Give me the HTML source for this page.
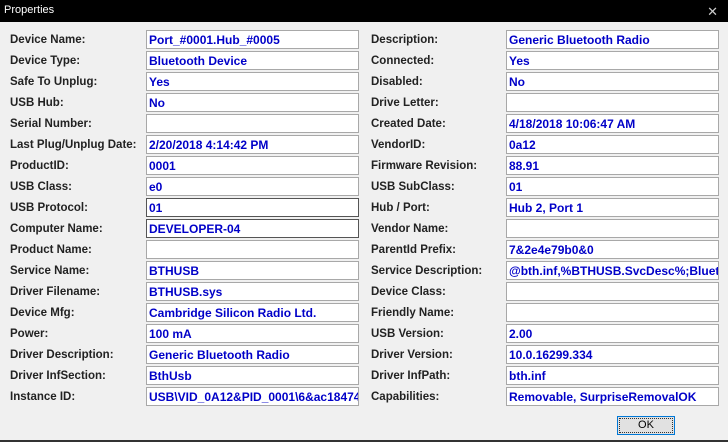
<!DOCTYPE html><html><head><style>
body{margin:0;width:728px;height:442px;background:#f0f0f0;position:relative;overflow:hidden;font-family:"Liberation Sans",sans-serif;}
.t{position:absolute;left:0;top:0;width:728px;height:22px;background:#000;color:#fff;font-size:11px;line-height:22px;}
.t span{position:absolute;left:4px;top:-1px}
.x{position:absolute;right:10px;top:1px;font-size:13px;color:#ccc}
.l{position:absolute;font-size:11.5px;font-weight:bold;color:#222;white-space:nowrap;margin-top:1px}
.f{position:absolute;height:17px;background:#fff;border:1px solid #a8a8a8;font-size:12px;font-weight:bold;color:#0000c8;line-height:18px;padding-left:2px;overflow:hidden;white-space:nowrap;box-sizing:content-box}
.d{border-color:#555}
.ok{position:absolute;left:617px;top:416px;width:56px;height:17px;border:1px solid #0078d7;background:#e1e1e1;font-size:11px;text-align:center;line-height:17px;outline:1px dotted #333;outline-offset:-3px}
.bt{position:absolute;left:0;top:440px;width:728px;height:2px;background:#333}
</style></head><body>
<div class="t"><span>Properties</span><div class="x">✕</div></div>
<div class="ok">OK</div>
<div class="bt"></div>
<div class="l" style="left:10px;top:33px">Device Name:</div><div class="f" style="left:146px;top:30px;width:209px">Port_#0001.Hub_#0005</div>
<div class="l" style="left:10px;top:54px">Device Type:</div><div class="f" style="left:146px;top:51px;width:209px">Bluetooth Device</div>
<div class="l" style="left:10px;top:75px">Safe To Unplug:</div><div class="f" style="left:146px;top:72px;width:209px">Yes</div>
<div class="l" style="left:10px;top:96px">USB Hub:</div><div class="f" style="left:146px;top:93px;width:209px">No</div>
<div class="l" style="left:10px;top:117px">Serial Number:</div><div class="f" style="left:146px;top:114px;width:209px"></div>
<div class="l" style="left:10px;top:138px">Last Plug/Unplug Date:</div><div class="f" style="left:146px;top:135px;width:209px">2/20/2018 4:14:42 PM</div>
<div class="l" style="left:10px;top:159px">ProductID:</div><div class="f" style="left:146px;top:156px;width:209px">0001</div>
<div class="l" style="left:10px;top:180px">USB Class:</div><div class="f" style="left:146px;top:177px;width:209px">e0</div>
<div class="l" style="left:10px;top:201px">USB Protocol:</div><div class="f d" style="left:146px;top:198px;width:209px">01</div>
<div class="l" style="left:10px;top:222px">Computer Name:</div><div class="f d" style="left:146px;top:219px;width:209px">DEVELOPER-04</div>
<div class="l" style="left:10px;top:243px">Product Name:</div><div class="f" style="left:146px;top:240px;width:209px"></div>
<div class="l" style="left:10px;top:264px">Service Name:</div><div class="f" style="left:146px;top:261px;width:209px">BTHUSB</div>
<div class="l" style="left:10px;top:285px">Driver Filename:</div><div class="f" style="left:146px;top:282px;width:209px">BTHUSB.sys</div>
<div class="l" style="left:10px;top:306px">Device Mfg:</div><div class="f" style="left:146px;top:303px;width:209px">Cambridge Silicon Radio Ltd.</div>
<div class="l" style="left:10px;top:327px">Power:</div><div class="f" style="left:146px;top:324px;width:209px">100 mA</div>
<div class="l" style="left:10px;top:348px">Driver Description:</div><div class="f" style="left:146px;top:345px;width:209px">Generic Bluetooth Radio</div>
<div class="l" style="left:10px;top:369px">Driver InfSection:</div><div class="f" style="left:146px;top:366px;width:209px">BthUsb</div>
<div class="l" style="left:10px;top:390px">Instance ID:</div><div class="f" style="left:146px;top:387px;width:209px">USB\VID_0A12&amp;PID_0001\6&amp;ac18474a</div>
<div class="l" style="left:371px;top:33px">Description:</div><div class="f" style="left:506px;top:30px;width:209px">Generic Bluetooth Radio</div>
<div class="l" style="left:371px;top:54px">Connected:</div><div class="f" style="left:506px;top:51px;width:209px">Yes</div>
<div class="l" style="left:371px;top:75px">Disabled:</div><div class="f" style="left:506px;top:72px;width:209px">No</div>
<div class="l" style="left:371px;top:96px">Drive Letter:</div><div class="f" style="left:506px;top:93px;width:209px"></div>
<div class="l" style="left:371px;top:117px">Created Date:</div><div class="f" style="left:506px;top:114px;width:209px">4/18/2018 10:06:47 AM</div>
<div class="l" style="left:371px;top:138px">VendorID:</div><div class="f" style="left:506px;top:135px;width:209px">0a12</div>
<div class="l" style="left:371px;top:159px">Firmware Revision:</div><div class="f" style="left:506px;top:156px;width:209px">88.91</div>
<div class="l" style="left:371px;top:180px">USB SubClass:</div><div class="f" style="left:506px;top:177px;width:209px">01</div>
<div class="l" style="left:371px;top:201px">Hub / Port:</div><div class="f" style="left:506px;top:198px;width:209px">Hub 2, Port 1</div>
<div class="l" style="left:371px;top:222px">Vendor Name:</div><div class="f" style="left:506px;top:219px;width:209px"></div>
<div class="l" style="left:371px;top:243px">ParentId Prefix:</div><div class="f" style="left:506px;top:240px;width:209px">7&amp;2e4e79b0&amp;0</div>
<div class="l" style="left:371px;top:264px">Service Description:</div><div class="f" style="left:506px;top:261px;width:209px">@bth.inf,%BTHUSB.SvcDesc%;Bluetooth</div>
<div class="l" style="left:371px;top:285px">Device Class:</div><div class="f" style="left:506px;top:282px;width:209px"></div>
<div class="l" style="left:371px;top:306px">Friendly Name:</div><div class="f" style="left:506px;top:303px;width:209px"></div>
<div class="l" style="left:371px;top:327px">USB Version:</div><div class="f" style="left:506px;top:324px;width:209px">2.00</div>
<div class="l" style="left:371px;top:348px">Driver Version:</div><div class="f" style="left:506px;top:345px;width:209px">10.0.16299.334</div>
<div class="l" style="left:371px;top:369px">Driver InfPath:</div><div class="f" style="left:506px;top:366px;width:209px">bth.inf</div>
<div class="l" style="left:371px;top:390px">Capabilities:</div><div class="f" style="left:506px;top:387px;width:209px">Removable, SurpriseRemovalOK</div>
</body></html>
